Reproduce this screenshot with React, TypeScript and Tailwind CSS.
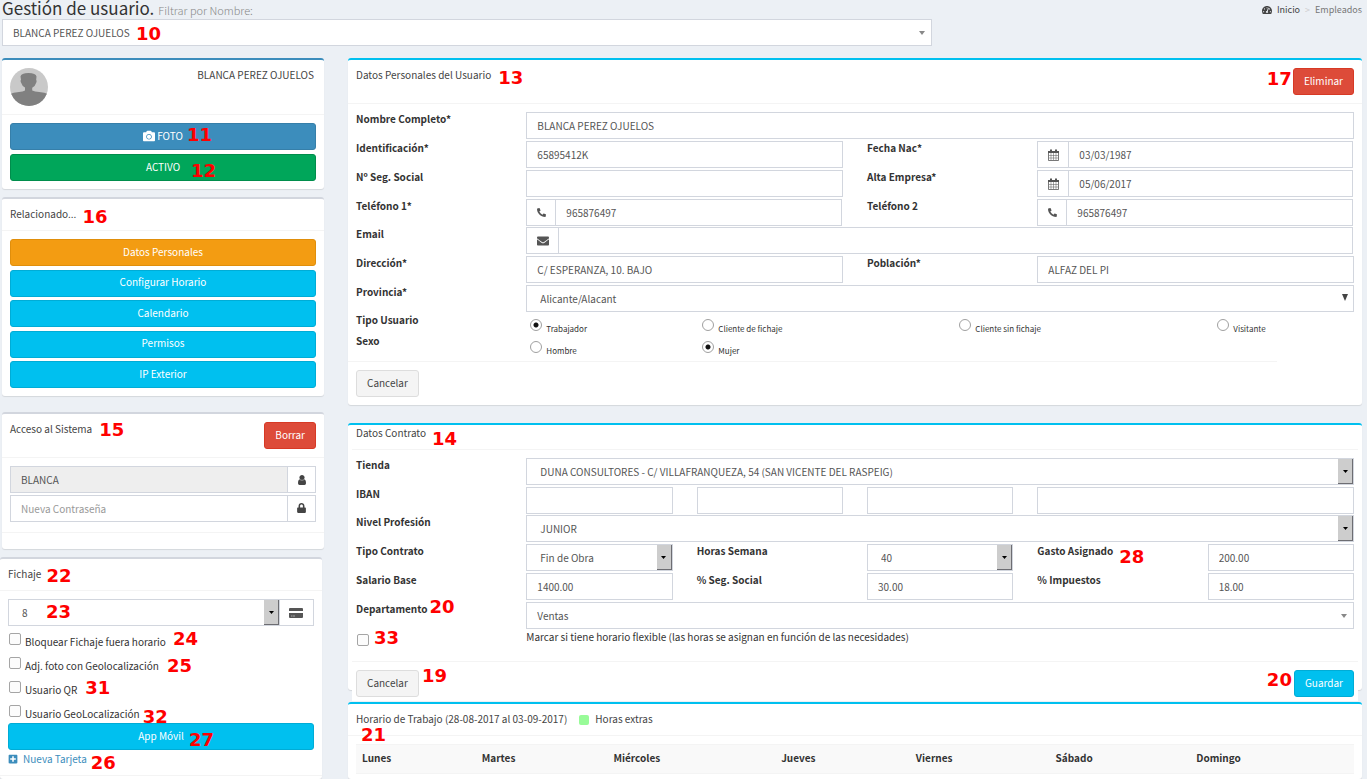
import type { ReactNode } from "react";
import clsx from "clsx";
import { FaCamera, FaEnvelope, FaLock, FaPhoneAlt, FaPlusSquare, FaTachometerAlt } from "react-icons/fa";

const control =
  "block w-full h-[27px] border border-[#d2d6de] text-[10px] text-[#555] placeholder:text-[#999] outline-none appearance-none rounded-none";

const related = ["Configurar Horario", "Calendario", "Permisos", "IP Exterior"];

const clockOptions = [
  { id: "bloquear", label: "Bloquear Fichaje fuera horario", mark: "24", markClass: "ml-[7px] -top-[5px]" },
  { id: "adjuntar", label: "Adj. foto con Geolocalización", mark: "25", markClass: "ml-[8px] -top-[2px]" },
  { id: "qr", label: "Usuario QR", mark: "31", markClass: "ml-[8px] -top-[4px]" },
  { id: "geo", label: "Usuario GeoLocalización", mark: "32", markClass: "ml-[3px] top-[1px]" },
];

const userTypes = ["Trabajador", "Cliente de fichaje", "Cliente sin fichaje", "Visitante"];

const days = [
  { name: "Lunes", width: "w-[12%]" },
  { name: "Martes", width: "w-[13.2%]" },
  { name: "Miércoles", width: "w-[16.8%]" },
  { name: "Jueves", width: "w-[13.5%]" },
  { name: "Viernes", width: "w-[14%]" },
  { name: "Sábado", width: "w-[14.1%]" },
  { name: "Domingo", width: "w-[16.4%]" },
];

function Mark({ children, className }: { children: ReactNode; className: string }) {
  return (
    <span
      className={clsx(
        "absolute z-10 pointer-events-none font-['DejaVu_Sans',sans-serif] font-bold text-[18px] leading-[18px] text-[#f00]",
        className
      )}
    >
      {children}
    </span>
  );
}

function Box({ children, className }: { children: ReactNode; className?: string }) {
  return (
    <section className={clsx("rounded-[3px] border-t-2 bg-white shadow-[0_1px_1px_rgba(0,0,0,0.1)]", className)}>
      {children}
    </section>
  );
}

function Button({ children, className }: { children: ReactNode; className: string }) {
  return (
    <button
      type="button"
      className={clsx("relative flex h-[27px] items-center justify-center rounded-[3px] border pb-[2px] text-[10px] leading-[14px] cursor-pointer", className)}
    >
      {children}
    </button>
  );
}

function Row({ children, tight }: { children: ReactNode; tight?: boolean }) {
  return <div className={clsx("grid grid-cols-12 gap-x-6", tight ? "h-[28px]" : "h-[29px]")}>{children}</div>;
}

function Label({ htmlFor, children }: { htmlFor: string; children: ReactNode }) {
  return (
    <label htmlFor={htmlFor} className="relative col-span-2 self-start justify-self-start whitespace-nowrap text-[10px] leading-[14px] font-bold text-[#333]">
      {children}
    </label>
  );
}

function TextInput({ id, value = "", className }: { id: string; value?: string; className?: string }) {
  return (
    <div className={className}>
      <input id={id} type="text" defaultValue={value} aria-label={id} className={clsx(control, "bg-white px-[10px]")} />
    </div>
  );
}

interface IconInputProps {
  id: string;
  value?: string;
  icon: ReactNode;
  addon: string;
  className: string;
}

function IconInput({ id, value = "", icon, addon, className }: IconInputProps) {
  return (
    <div className={clsx("flex pr-px", className)}>
      <span className={clsx("flex h-[27px] shrink-0 items-center justify-center border border-r-0 border-[#d2d6de] text-[#555]", addon)}>
        {icon}
      </span>
      <input id={id} type="text" defaultValue={value} className={clsx(control, "min-w-0 flex-1 bg-white px-[10px]")} />
    </div>
  );
}

interface SelectProps {
  id: string;
  value: string;
  arrow: "classic" | "plain" | "caret";
  className?: string;
  label?: string;
}

function Select({ id, value, arrow, className, label }: SelectProps) {
  return (
    <div className={clsx("relative h-[27px]", className)}>
      <select id={id} aria-label={label} className={clsx(control, "bg-white", arrow === "caret" ? "px-[10px]" : "px-[13px]")}>
        <option>{value}</option>
      </select>
      {arrow === "classic" && (
        <span className="pointer-events-none absolute top-px right-px bottom-px flex w-[15px] items-center justify-center border-r border-b border-[#6d6d72] bg-[#cdcdcd]">
          <svg viewBox="0 0 5 3" className="h-[3px] w-[5px]"><path d="M0 0h5L2.500 3z" fill="#000" /></svg>
        </span>
      )}
      {arrow === "plain" && (
        <svg viewBox="0 0 6 7" className="pointer-events-none absolute top-[9px] right-[6px] h-[7px] w-[6px]"><path d="M0 0h6L3 7z" fill="#444" /></svg>
      )}
      {arrow === "caret" && (
        <svg viewBox="0 0 6 4" className="pointer-events-none absolute top-[12px] right-[7px] h-[4px] w-[6px]"><path d="M0 0h6L3 4z" fill="#888" /></svg>
      )}
    </div>
  );
}

function CheckBox({ id }: { id: string }) {
  return (
    <input
      id={id}
      type="checkbox"
      className="h-3 w-3 shrink-0 appearance-none rounded-[2px] border border-[#a5a5a5] bg-[#fcfcfc] checked:bg-[#555]"
    />
  );
}

function RadioOption({ name, label, checked }: { name: string; label: string; checked?: boolean }) {
  return (
    <label className="flex items-start gap-1 text-[8px] leading-[12px] text-[#333]">
      <input
        type="radio"
        name={name}
        defaultChecked={checked}
        className="h-3 w-3 shrink-0 appearance-none rounded-full border border-[#a0a0a0] bg-white checked:bg-[radial-gradient(circle,#111_0_2px,#fff_3px)]"
      />
      <span className="mt-[4px] whitespace-nowrap">{label}</span>
    </label>
  );
}

function CalendarIcon() {
  return (
    <svg viewBox="0 0 11 12" className="h-3 w-[11px]" fill="none" stroke="#555">
      <path d="M.5 2.500h10v9H.5z" strokeWidth=".8" />
      <path d="M0 3h11" strokeWidth="2" />
      <path d="M3 .5v2M8 .5v2" strokeWidth="2" />
      <path d="M3 4v7M5.500 4v7M8 4v7M1 6.500h9M1 9h9" strokeWidth=".5" />
    </svg>
  );
}

function UserIcon() {
  return (
    <svg viewBox="0 0 8 10" className="h-[10px] w-2" fill="#444">
      <path d="M4 0a2.500 2.500 0 0 1 1.800 4.300Q8 4.500 8 8.300 8 10 6.500 10h-5Q0 10 0 8.300 0 4.500 2.200 4.300A2.500 2.500 0 0 1 4 0z" />
      <path d="M1.900 4.700Q4 6 6.100 4.700" fill="none" stroke="#fff" strokeWidth=".4" />
    </svg>
  );
}

function CardIcon() {
  return (
    <svg viewBox="0 0 14 10" className="h-[10px] w-[14px]" fill="#555">
      <path d="M1 0h12q1 0 1 1v2H0V1q0-1 1-1zM0 5h14v4q0 1-1 1H1q-1 0-1-1z" />
      <path d="M2 8h1.500M4 8h2" stroke="#bbb" strokeWidth=".8" />
    </svg>
  );
}

function Avatar() {
  return (
    <svg viewBox="0 0 38 38" className="h-[38px] w-[38px]" role="img" aria-label="Foto de usuario">
      <defs>
        <clipPath id="avatar-clip"><circle cx="19" cy="19" r="19" /></clipPath>
      </defs>
      <g clipPath="url(#avatar-clip)">
        <path d="M0 0h38v38H0z" fill="#c9c9c9" />
        <path
          d="M10.500 8.500Q11 5 18.500 5q7.500 0 8 3.500l-.3 3.500q.8 1 0 2.700-1 3.500-4 5V22.500q2.500 1 7 1.500 6 .5 9 2v12H0V26q3-1.500 9-2 4-.5 6-1.500v-3q-3-1.500-4-5-.8-1.700 0-2.700z"
          fill="#808080"
        />
      </g>
    </svg>
  );
}

function Sidebar() {
  return (
    <aside className="flex flex-col">
      <Box className="border-[#3c8dbc]">
        <div className="flex h-[55px] items-start justify-between border-b border-[#f4f4f4] px-2 pt-2">
          <Avatar />
          <span className="pr-[2px] text-[10px] leading-[14px]">BLANCA PEREZ OJUELOS</span>
        </div>
        <div className="flex flex-col gap-1 p-2">
          <Button className="gap-[2px] border-[#367fa9] bg-[#3c8dbc] text-white">
            <FaCamera className="h-3 w-3" />
            <span>FOTO</span>
            <Mark className="left-[176px] top-[2px]">11</Mark>
          </Button>
          <Button className="border-[#008d4c] bg-[#00a65a] text-white">
            ACTIVO
            <Mark className="left-[180px] top-[7px]">12</Mark>
          </Button>
        </div>
      </Box>

      <Box className="mt-2 border-[#d2d6de]">
        <div className="h-8 border-b border-[#f4f4f4] px-2 pt-2">
          <h2 className="relative w-fit text-[10px] leading-[14px]">
            Relacionado...
            <Mark className="left-full top-[1px] ml-[6px]">16</Mark>
          </h2>
        </div>
        <div className="flex h-[165px] flex-col justify-between p-2">
          <Button className="border-[#e08e0b] bg-[#f39c12] text-white">Datos Personales</Button>
          {related.map((item) => (
            <Button key={item} className="border-[#00acd6] bg-[#00c0ef] text-white">{item}</Button>
          ))}
        </div>
      </Box>

      <Box className="mt-4 border-[#d2d6de]">
        <div className="flex h-11 items-start justify-between border-b border-[#f4f4f4] p-2">
          <h2 className="relative text-[10px] leading-[14px]">
            Acceso al Sistema
            <Mark className="left-full -top-[1px] ml-[7px]">15</Mark>
          </h2>
          <Button className="border-[#d73925] bg-[#dd4b39] px-[10px] text-white">Borrar</Button>
        </div>
        <div className="flex flex-col gap-[2px] px-2 pt-2 pb-[10px]">
          <div className="flex">
            <input aria-label="Usuario" readOnly defaultValue="BLANCA" className={clsx(control, "flex-1 bg-[#eee] px-[10px]")} />
            <span className="flex w-7 items-center justify-center border border-l-0 border-[#d2d6de]"><UserIcon /></span>
          </div>
          <div className="flex">
            <input aria-label="Nueva Contraseña" type="password" placeholder="Nueva Contraseña" className={clsx(control, "flex-1 bg-white px-[10px]")} />
            <span className="flex w-7 items-center justify-center border border-l-0 border-[#d2d6de] pb-[2px] text-[#444]"><FaLock className="h-[10px] w-[9px]" /></span>
          </div>
        </div>
        <div className="h-[17px] border-t border-[#f4f4f4]" />
      </Box>

      <Box className="mt-2 mr-[2px] -ml-[2px] flex-1 border-[#d2d6de]">
        <div className="h-8 border-b border-[#f4f4f4] px-2 pt-2">
          <h2 className="relative w-fit text-[10px] leading-[14px]">
            Fichaje
            <Mark className="left-full top-0 ml-[5px]">22</Mark>
          </h2>
        </div>
        <div className="px-2 pt-2">
          <div className="relative flex">
            <Select id="tarjeta" label="Tarjeta" value="8" arrow="classic" className="flex-1" />
            <span className="flex w-[34px] items-center justify-center border border-l-0 border-[#d2d6de] pr-[2px]"><CardIcon /></span>
            <Mark className="left-[38px] top-[4px]">23</Mark>
          </div>
          <div className="pt-[7px]">
            {clockOptions.map((option) => (
              <div key={option.id} className="flex h-6 items-start gap-1 pl-px">
                <CheckBox id={option.id} />
                <label htmlFor={option.id} className="relative mt-[2px] text-[10px] leading-[14px] text-[#333]">
                  {option.label}
                  <Mark className={clsx("left-full", option.markClass)}>{option.mark}</Mark>
                </label>
              </div>
            ))}
          </div>
          <Button className="-mt-[6px] w-full border-[#00acd6] bg-[#00c0ef] text-white">
            App Móvil
            <Mark className="left-[180px] top-[7px]">27</Mark>
          </Button>
          <a href="#tarjeta" className="relative mt-[2px] flex w-fit items-center gap-[5px] text-[10px] leading-[14px] text-[#3c8dbc]">
            <FaPlusSquare className="h-[10px] w-[10px]" />
            Nueva Tarjeta
            <Mark className="left-full top-[2px] ml-[4px]">26</Mark>
          </a>
        </div>
        <div className="mt-[9px] border-t border-[#f4f4f4]" />
      </Box>
    </aside>
  );
}

function PersonalData() {
  return (
    <Box className="border-[#00c0ef]">
      <div className="flex h-11 items-start justify-between border-b border-[#f4f4f4] p-2">
        <h2 className="relative text-[10px] leading-[14px]">
          Datos Personales del Usuario
          <Mark className="left-full top-[1px] ml-[7px]">13</Mark>
        </h2>
        <Button className="border-[#d73925] bg-[#dd4b39] px-[10px] text-white">
          Eliminar
          <Mark className="right-full top-[1px] mr-[2px]">17</Mark>
        </Button>
      </div>
      <div className="px-2 pt-2">
        <Row>
          <Label htmlFor="nombre">Nombre Completo*</Label>
          <TextInput id="nombre" value="BLANCA PEREZ OJUELOS" className="col-span-10" />
        </Row>
        <Row>
          <Label htmlFor="identificacion">Identificación*</Label>
          <TextInput id="identificacion" value="65895412K" className="col-span-4" />
          <Label htmlFor="nacimiento">Fecha Nac*</Label>
          <IconInput id="nacimiento" value="03/03/1987" icon={<CalendarIcon />} addon="w-[31px]" className="col-span-4" />
        </Row>
        <Row>
          <Label htmlFor="seguridad">Nº Seg. Social</Label>
          <TextInput id="seguridad" className="col-span-4" />
          <Label htmlFor="alta">Alta Empresa*</Label>
          <IconInput id="alta" value="05/06/2017" icon={<CalendarIcon />} addon="w-[31px]" className="col-span-4" />
        </Row>
        <Row tight>
          <Label htmlFor="telefono1">Teléfono 1*</Label>
          <IconInput id="telefono1" value="965876497" icon={<FaPhoneAlt className="h-[9px] w-[9px]" />} addon="w-[29px]" className="col-span-4" />
          <Label htmlFor="telefono2">Teléfono 2</Label>
          <IconInput id="telefono2" value="965876497" icon={<FaPhoneAlt className="h-[9px] w-[9px]" />} addon="w-[29px]" className="col-span-4" />
        </Row>
        <Row>
          <Label htmlFor="email">Email</Label>
          <IconInput id="email" icon={<FaEnvelope className="h-3 w-3" />} addon="w-8" className="col-span-10" />
        </Row>
        <Row>
          <Label htmlFor="direccion">Dirección*</Label>
          <TextInput id="direccion" value="C/ ESPERANZA, 10. BAJO" className="col-span-4" />
          <Label htmlFor="poblacion">Población*</Label>
          <TextInput id="poblacion" value="ALFAZ DEL PI" className="col-span-4" />
        </Row>
        <Row>
          <Label htmlFor="provincia">Provincia*</Label>
          <Select id="provincia" value="Alicante/Alacant" arrow="plain" className="col-span-10" />
        </Row>
        <div role="radiogroup" aria-label="Tipo Usuario" className="grid h-[21px] grid-cols-12 gap-x-6">
          <span className="col-span-2 -mt-[1px] text-[10px] leading-[14px] font-bold text-[#333]">Tipo Usuario</span>
          <div className="col-span-10 grid grid-cols-[172px_257px_258px_1fr] pt-[5px] pl-1">
            {userTypes.map((type, index) => (
              <RadioOption key={type} name="tipo" label={type} checked={index === 0} />
            ))}
          </div>
        </div>
        <div role="radiogroup" aria-label="Sexo" className="grid h-[26px] grid-cols-12 gap-x-6">
          <span className="col-span-2 -mt-[1px] text-[10px] leading-[14px] font-bold text-[#333]">Sexo</span>
          <div className="col-span-10 grid grid-cols-[172px_257px_258px_1fr] pt-[6px] pl-1">
            <RadioOption name="sexo" label="Hombre" />
            <RadioOption name="sexo" label="Mujer" checked />
          </div>
        </div>
      </div>
      <div className="mr-[85px] border-t border-[#f4f4f4]" />
      <div className="flex p-2">
        <Button className="border-[#ddd] bg-[#f4f4f4] px-[10px] text-[#444]">Cancelar</Button>
      </div>
    </Box>
  );
}

function ContractData() {
  return (
    <Box className="mt-[18px] border-[#00c0ef]">
      <div className="mx-1 h-[25px] border-b border-[#f4f4f4] px-1 pt-[1px]">
        <h2 className="relative w-fit text-[10px] leading-[14px]">
          Datos Contrato
          <Mark className="left-full top-[4px] ml-[6px]">14</Mark>
        </h2>
      </div>
      <div className="px-2 pt-2">
        <Row>
          <Label htmlFor="tienda">Tienda</Label>
          <Select id="tienda" value="DUNA CONSULTORES - C/ VILLAFRANQUEZA, 54 (SAN VICENTE DEL RASPEIG)" arrow="classic" className="col-span-10" />
        </Row>
        <Row tight>
          <Label htmlFor="iban1">IBAN</Label>
          <TextInput id="iban1" className="col-span-2" />
          <TextInput id="iban2" className="col-span-2" />
          <TextInput id="iban3" className="col-span-2" />
          <TextInput id="iban4" className="col-span-4" />
        </Row>
        <Row>
          <Label htmlFor="nivel">Nivel Profesión</Label>
          <Select id="nivel" value="JUNIOR" arrow="classic" className="col-span-10" />
        </Row>
        <Row>
          <Label htmlFor="contrato">Tipo Contrato</Label>
          <Select id="contrato" value="Fin de Obra" arrow="classic" className="col-span-2" />
          <Label htmlFor="horas">Horas Semana</Label>
          <Select id="horas" value="40" arrow="classic" className="col-span-2" />
          <Label htmlFor="gasto">
            Gasto Asignado
            <Mark className="left-full top-[4px] ml-[6px]">28</Mark>
          </Label>
          <TextInput id="gasto" value="200.00" className="col-span-2" />
        </Row>
        <Row>
          <Label htmlFor="salario">Salario Base</Label>
          <TextInput id="salario" value="1400.00" className="col-span-2" />
          <Label htmlFor="segsocial">% Seg. Social</Label>
          <TextInput id="segsocial" value="30.00" className="col-span-2" />
          <Label htmlFor="impuestos">% Impuestos</Label>
          <TextInput id="impuestos" value="18.00" className="col-span-2" />
        </Row>
        <Row>
          <Label htmlFor="departamento">
            Departamento
            <Mark className="left-full -top-[4px] ml-[2px]">20</Mark>
          </Label>
          <Select id="departamento" value="Ventas" arrow="caret" className="col-span-10" />
        </Row>
        <div className="grid h-[30px] grid-cols-12 gap-x-6">
          <span className="relative col-span-2 flex items-start justify-self-start pt-[3px] pl-px">
            <CheckBox id="flexible" />
            <Mark className="left-full -top-[2px] ml-[5px]">33</Mark>
          </span>
          <label htmlFor="flexible" className="col-span-10 -mt-[1px] text-[10px] leading-[14px] text-[#333]">
            Marcar si tiene horario flexible (las horas se asignan en función de las necesidades)
          </label>
        </div>
      </div>
      <div className="relative mx-1 -mb-[11px] flex justify-between border-t border-[#f4f4f4] bg-white px-1 pt-2 pb-1">
        <Button className="border-[#ddd] bg-[#f4f4f4] px-[10px] text-[#444]">
          Cancelar
          <Mark className="left-full -top-[4px] ml-[4px]">19</Mark>
        </Button>
        <Button className="border-[#00acd6] bg-[#00c0ef] px-[10px] text-white">
          Guardar
          <Mark className="right-full top-0 mr-[3px]">20</Mark>
        </Button>
      </div>
    </Box>
  );
}

function Schedule() {
  return (
    <Box className="relative mt-3 flex-1 border-[#00c0ef]">
      <div className="relative flex h-8 items-start border-b border-[#f4f4f4] px-2 pt-2">
        <h2 className="text-[10px] leading-[14px]">Horario de Trabajo (28-08-2017 al 03-09-2017)</h2>
        <span className="mt-[3px] ml-3 h-[10px] w-[10px] rounded-[2px] bg-[#98fb98]" />
        <span className="ml-[6px] text-[10px] leading-[14px]">Horas extras</span>
        <Mark className="left-[13px] top-[22px]">21</Mark>
      </div>
      <div className="px-2 pt-2">
        <table className="w-full table-fixed text-left text-[10px] leading-[14px] text-[#333]">
          <thead>
            <tr className="h-[29px] border-y border-[#f4f4f4] bg-[#f9f9f9]">
              {days.map((day) => (
                <th key={day.name} scope="col" className={clsx("px-[6px] pb-[2px] font-bold", day.width)}>{day.name}</th>
              ))}
            </tr>
          </thead>
        </table>
      </div>
    </Box>
  );
}

export default function App() {
  return (
    <div className="flex min-h-screen flex-col bg-[#ecf0f5] pr-[5px] pl-[2px] font-['Noto_Sans_CJK_SC',sans-serif] text-[#444]">
      <header className="flex h-[58px] items-start justify-between">
        <div className="w-[68.4%]">
          <h1 className="flex h-[19px] items-baseline gap-1 whitespace-nowrap text-[17px] leading-[16px] text-[#333]">
            Gestión de usuario.
            <small className="text-[11px] font-light text-[#888]">Filtrar por Nombre:</small>
          </h1>
          <div className="relative">
            <Select id="empleado" label="Filtrar por Nombre" value="BLANCA PEREZ OJUELOS" arrow="caret" />
            <Mark className="left-[134px] top-[6px]">10</Mark>
          </div>
        </div>
        <nav className="flex items-center gap-[5px] pt-[3px] text-[9px] leading-[14px]">
          <a href="#inicio" className="flex items-center gap-[5px] text-[#444]">
            <FaTachometerAlt className="h-[10px] w-[10px]" />
            Inicio
          </a>
          <span className="text-[#ccc]">&gt;</span>
          <span className="text-[#777]">Empleados</span>
        </nav>
      </header>

      <div className="grid flex-1 grid-cols-[322px_minmax(0,1fr)] gap-6">
        <Sidebar />
        <main className="flex min-w-0 flex-col">
          <PersonalData />
          <ContractData />
          <Schedule />
        </main>
      </div>
    </div>
  );
}
